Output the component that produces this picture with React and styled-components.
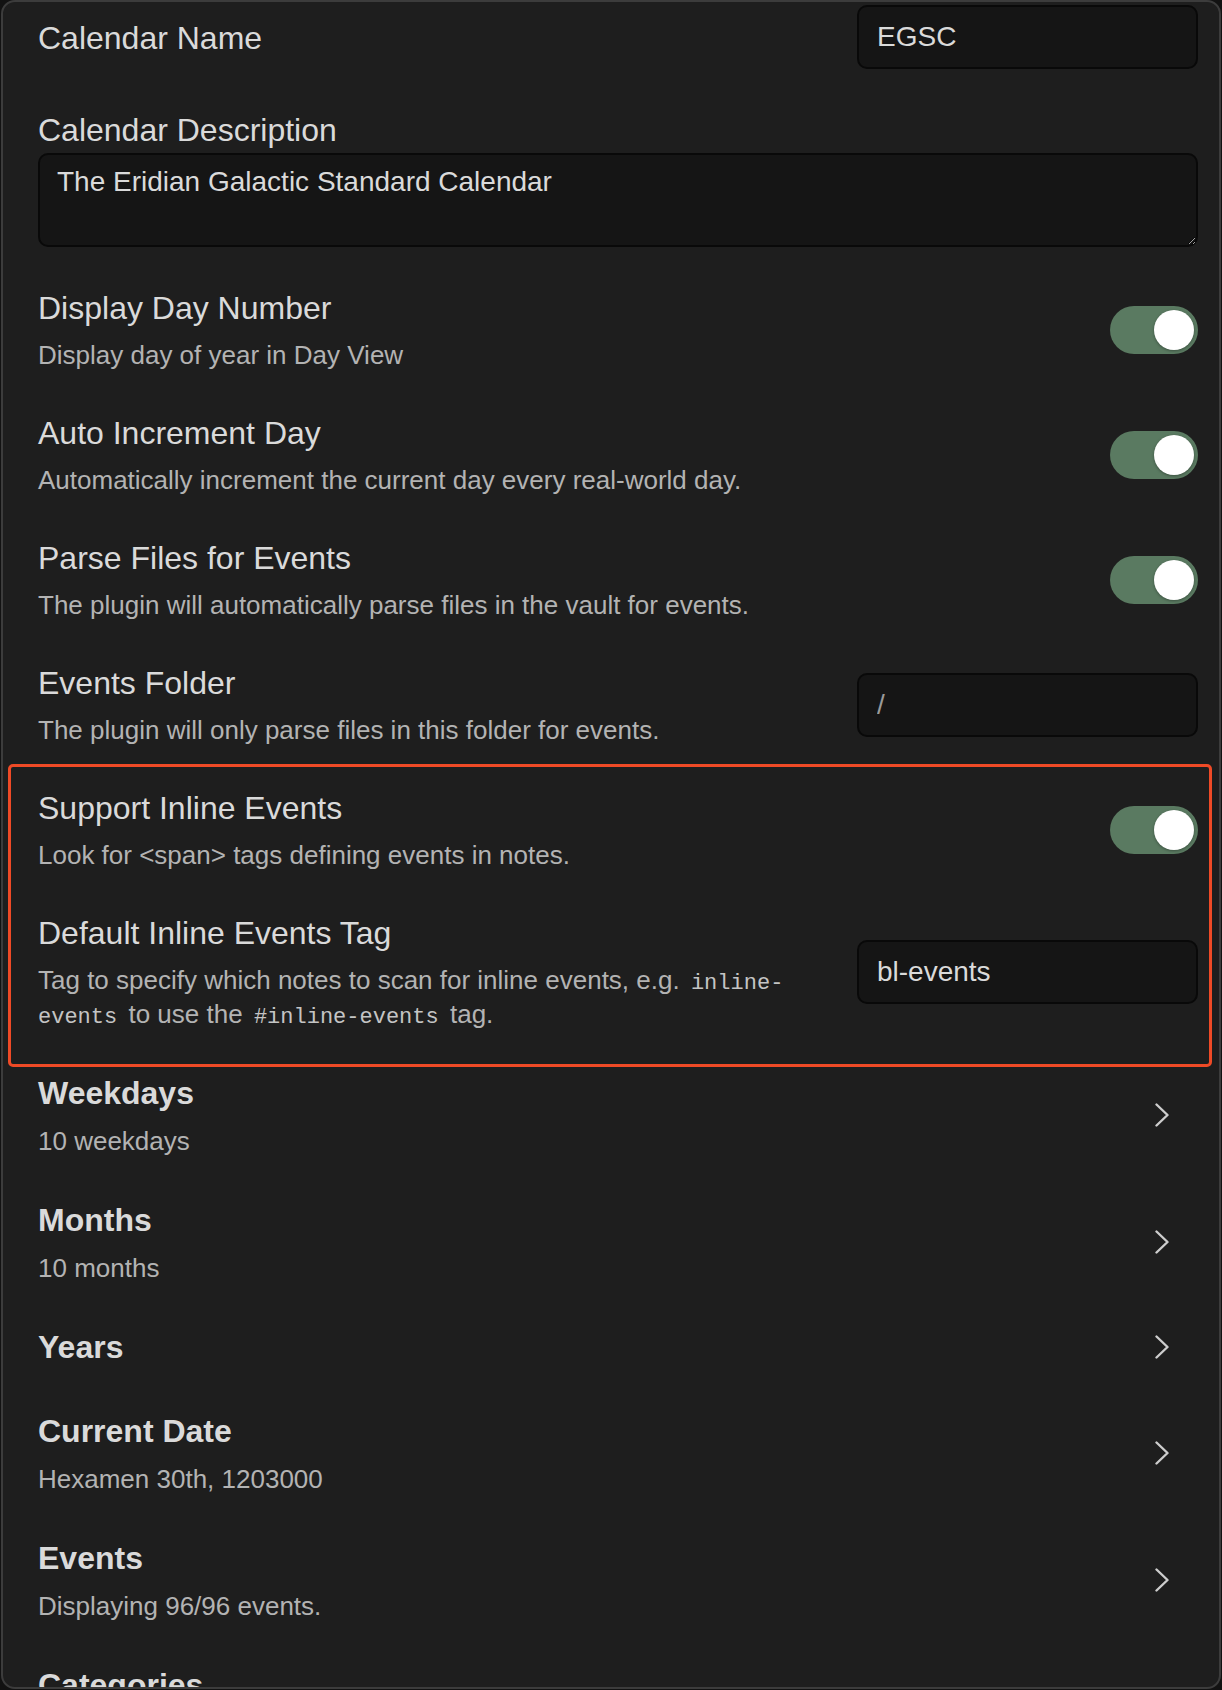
import styled, { createGlobalStyle } from "styled-components";

const toggleRows = [
  {
    name: "Display Day Number",
    desc: "Display day of year in Day View",
  },
  {
    name: "Auto Increment Day",
    desc: "Automatically increment the current day every real-world day.",
  },
  {
    name: "Parse Files for Events",
    desc: "The plugin will automatically parse files in the vault for events.",
  },
];

const navRows = [
  { name: "Weekdays", desc: "10 weekdays" },
  { name: "Months", desc: "10 months" },
  { name: "Years" },
  { name: "Current Date", desc: "Hexamen 30th, 1203000" },
  { name: "Events", desc: "Displaying 96/96 events." },
  // last row is cut by the bottom of the modal
  { name: "Categories", partial: true },
];

const Chevron = () => (
  <svg width="14" height="24" viewBox="0 0 14 24" fill="none">
    <polyline
      points="1.5,1.5 12.5,12 1.5,22.5"
      stroke="#cdcdcd"
      strokeWidth="2.4"
      strokeLinecap="round"
      strokeLinejoin="round"
    />
  </svg>
);

const Toggle = () => (
  <ToggleTrack>
    <ToggleKnob />
  </ToggleTrack>
);

const App = () => {
  return (
    <>
      <GlobalStyle />
      <Panel>
        <SettingItem $first>
          <Info>
            <Name>Calendar Name</Name>
          </Info>
          <Control>
            <TextInput type="text" defaultValue="EGSC" />
          </Control>
        </SettingItem>

        <SettingItem $stacked>
          <Name>Calendar Description</Name>
          <TextArea defaultValue="The Eridian Galactic Standard Calendar" />
        </SettingItem>

        {toggleRows.map((row) => (
          <SettingItem key={row.name}>
            <Info>
              <Name>{row.name}</Name>
              <Description>{row.desc}</Description>
            </Info>
            <Control>
              <Toggle />
            </Control>
          </SettingItem>
        ))}

        <SettingItem>
          <Info>
            <Name>Events Folder</Name>
            <Description>The plugin will only parse files in this folder for events.</Description>
          </Info>
          <Control>
            <TextInput type="text" defaultValue="/" $muted />
          </Control>
        </SettingItem>

        <Highlight>
          <SettingItem>
            <Info>
              <Name>Support Inline Events</Name>
              <Description>Look for &lt;span&gt; tags defining events in notes.</Description>
            </Info>
            <Control>
              <Toggle />
            </Control>
          </SettingItem>
          <SettingItem>
            <Info>
              <Name>Default Inline Events Tag</Name>
              <Description>
                Tag to specify which notes to scan for inline events, e.g. <Code>inline-events</Code> to use
                the <Code>#inline-events</Code> tag.
              </Description>
            </Info>
            <Control>
              <TextInput type="text" defaultValue="bl-events" />
            </Control>
          </SettingItem>
        </Highlight>

        {navRows.map((row) => (
          <SettingItem key={row.name}>
            <Info>
              <Name $bold>{row.name}</Name>
              {row.desc && <Description $tight>{row.desc}</Description>}
            </Info>
            {!row.partial && (
              <ChevronBox>
                <Chevron />
              </ChevronBox>
            )}
          </SettingItem>
        ))}
      </Panel>
    </>
  );
};

const GlobalStyle = createGlobalStyle`
  html, body {
    margin: 0;
    padding: 0;
    background: #121212;
  }
  body {
    font-family: "Liberation Sans", Arial, sans-serif;
    -webkit-font-smoothing: antialiased;
  }
`;

const Panel = styled.div`
  box-sizing: border-box;
  height: 1689px;
  margin: 0 1px;
  padding: 3px 21px 0 35px;
  background: #1e1e1e;
  border: 2px solid #3c3c3c;
  border-radius: 14px;
  overflow: hidden;
`;

// setting rows
const SettingItem = styled.div`
  display: flex;
  flex-direction: ${(p) => (p.$stacked ? "column" : "row")};
  align-items: ${(p) => (p.$stacked ? "stretch" : "center")};
  gap: ${(p) => (p.$stacked ? "4px" : "30px")};
  padding: ${(p) => (p.$first ? "0 0 20px" : "20px 0")};
`;

const Info = styled.div`
  flex: 1;
  min-width: 0;
`;

const Name = styled.div`
  padding-top: ${(p) => (p.$bold ? "0" : "2px")};
  font-size: 32px;
  line-height: ${(p) => (p.$bold ? "44px" : "38px")};
  font-weight: ${(p) => (p.$bold ? 700 : 400)};
  color: #dadada;
`;

const Description = styled.div`
  margin-top: ${(p) => (p.$tight ? "9px" : "11px")};
  font-size: 26px;
  line-height: 34px;
  color: #b3b3b3;
`;

const Code = styled.code`
  font-family: "Liberation Mono", "DejaVu Sans Mono", monospace;
  font-size: 22px;
  line-height: 1;
  padding: 0 4px;
  color: #c4c4c4;
`;

const Control = styled.div`
  flex: none;
  display: flex;
  justify-content: flex-end;
  align-items: center;
`;

const TextInput = styled.input`
  box-sizing: border-box;
  width: 341px;
  height: 64px;
  padding: 0 18px;
  background: #151515;
  border: 2px solid #090909;
  border-radius: 10px;
  color: ${(p) => (p.$muted ? "#9a9a9a" : "#dadada")};
  font-family: inherit;
  font-size: 28px;
  outline: none;
`;

const TextArea = styled.textarea`
  box-sizing: border-box;
  display: block;
  width: 100%;
  height: 94px;
  padding: 10px 17px;
  background: #151515;
  border: 2px solid #090909;
  border-radius: 10px;
  color: #dadada;
  font-family: inherit;
  font-size: 28px;
  line-height: 34px;
  resize: vertical;
  outline: none;
  color-scheme: dark;
`;

const ToggleTrack = styled.div`
  position: relative;
  width: 88px;
  height: 48px;
  border-radius: 24px;
  background: #5a7a61;
`;

const ToggleKnob = styled.div`
  position: absolute;
  top: 4px;
  right: 4px;
  width: 40px;
  height: 40px;
  border-radius: 50%;
  background: #ffffff;
  box-shadow: 0 1px 3px rgba(0, 0, 0, 0.35);
`;

const ChevronBox = styled.div`
  flex: none;
  display: flex;
  align-items: center;
  padding-right: 29px;
`;

// red annotation frame around the inline-events settings
const Highlight = styled.div`
  position: relative;

  &::after {
    content: "";
    position: absolute;
    top: -3px;
    bottom: -16px;
    left: -30px;
    right: -14px;
    border: 3px solid #ef4a26;
    border-radius: 5px;
    pointer-events: none;
  }
`;

export default App;
